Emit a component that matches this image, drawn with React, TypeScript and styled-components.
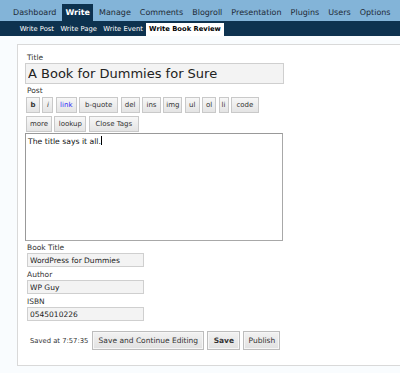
import React from "react";
import styled, { createGlobalStyle } from "styled-components";

const Global = createGlobalStyle`
  html, body { margin: 0; padding: 0; background: #f9fcfe; }
  body {
    font-family: "DejaVu Sans", Verdana, sans-serif;
    color: #333;
    overflow: hidden;
    text-rendering: geometricPrecision;
  }
  * { box-sizing: border-box; }
`;

const Page = styled.div`
  width: 400px;
  height: 373px;
  overflow: hidden;
  background: #f9fcfe;
`;

const MainNav = styled.ul`
  display: flex;
  gap: 3px;
  margin: 0;
  padding: 4px 0 0 10px;
  height: 21px;
  list-style: none;
  background: #83b4d8;
  white-space: nowrap;
`;

const MainItem = styled.li<{ $current?: boolean }>`
  height: 17px;
  line-height: 17px;
  padding: 0 3px;
  font-size: 8px;
  font-weight: ${(p) => (p.$current ? "bold" : "normal")};
  color: ${(p) => (p.$current ? "#fff" : "#1e2a36")};
  background: ${(p) => (p.$current ? "#0d324f" : "transparent")};
`;

const SubNav = styled.ul`
  display: flex;
  margin: 0;
  padding: 2px 0 0 16.5px;
  height: 15px;
  list-style: none;
  background: #0d324f;
  white-space: nowrap;
`;

const SubItem = styled.li<{ $current?: boolean }>`
  height: 13px;
  line-height: 13px;
  padding: 0 ${(p) => (p.$current ? "3px" : "3.2px")};
  font-size: ${(p) => (p.$current ? "6.75px" : "6.8px")};
  font-weight: ${(p) => (p.$current ? "bold" : "normal")};
  color: ${(p) => (p.$current ? "#000" : "#fff")};
  background: ${(p) => (p.$current ? "#fff" : "transparent")};
`;

const Wrap = styled.div`
  margin: 8px 0 0 17px;
  width: 420px;
  background: #fff;
  border: 1px solid #d9d9d9;
  padding: 8px 0 15px 7px;
`;

const Label = styled.div<{ $top?: number }>`
  font-size: 7.5px;
  line-height: ${(p) => (p.$top !== undefined ? "10px" : "9px")};
  margin-top: ${(p) => p.$top ?? 0}px;
  padding-left: 2px;
  color: #333;
`;

const TitleInput = styled.input`
  display: block;
  width: 259px;
  height: 21px;
  margin: 1px 0 2px;
  padding: 0 2px;
  border: 1px solid #cfcfcf;
  background: #f3f3f3;
  font-family: "DejaVu Sans", Verdana, sans-serif;
  font-size: 13px;
  color: #222;
  outline: none;
`;

const Toolbar = styled.div<{ $top: number }>`
  display: flex;
  gap: 2.4px;
  margin: ${(p) => p.$top}px 0 0 1px;
  height: 16px;
`;

const QTag = styled.span<{ $w?: number; $weight?: string; $style?: string; $color?: string }>`
  display: flex;
  align-items: center;
  justify-content: center;
  height: 100%;
  width: ${(p) => (p.$w ? `${p.$w}px` : "auto")};
  border: 1px solid #c9c9c9;
  background: linear-gradient(#f7f7f7, #e4e4e4);
  font-size: 7px;
  font-weight: ${(p) => p.$weight ?? "normal"};
  font-style: ${(p) => p.$style ?? "normal"};
  color: ${(p) => p.$color ?? "#333"};
  white-space: nowrap;
`;

const Editor = styled.div`
  width: 258px;
  height: 108px;
  margin-top: 1px;
  border: 1px solid #a8a8a8;
  border-top-color: #999;
  border-left-color: #999;
  background: #fff;
  padding: 2px 2px;
  font-size: 7.7px;
  line-height: 10px;
  color: #111;
`;

const Caret = styled.span`
  display: inline-block;
  width: 1px;
  height: 9px;
  margin-left: 0.5px;
  background: #000;
  vertical-align: -1.5px;
`;

const Field = styled.input`
  display: block;
  width: 117px;
  height: 14px;
  margin-left: 2px;
  padding: 0 2px;
  border: 1px solid #cfcfcf;
  background: #f3f3f3;
  font-family: "DejaVu Sans", Verdana, sans-serif;
  font-size: 7.5px;
  color: #222;
  outline: none;
`;

const Actions = styled.div`
  display: flex;
  align-items: center;
  margin-top: 10px;
  padding-left: 5px;
  height: 19px;
`;

const Saved = styled.span`
  font-size: 6.8px;
  color: #333;
  margin-right: 4px;
`;

const ActionButton = styled.span<{ $w: number; $bold?: boolean }>`
  display: flex;
  align-items: center;
  justify-content: center;
  width: ${(p) => p.$w}px;
  height: 19px;
  margin-right: 3px;
  border: 1px solid #bdbdbd;
  box-shadow: inset 0 0 0 1px #f6f6f6;
  background: linear-gradient(#f2f2f2, #e1e1e1);
  font-size: 7.5px;
  font-weight: ${(p) => (p.$bold ? "bold" : "normal")};
  color: #333;
  white-space: nowrap;
`;

const menu = ["Dashboard", "Write", "Manage", "Comments", "Blogroll", "Presentation", "Plugins", "Users", "Options"];
const sub = ["Write Post", "Write Page", "Write Event", "Write Book Review"];

export default function App() {
  return (
    <Page>
      <Global />
      <MainNav>
        {menu.map((m) => (
          <MainItem key={m} $current={m === "Write"}>
            {m}
          </MainItem>
        ))}
      </MainNav>
      <SubNav>
        {sub.map((s) => (
          <SubItem key={s} $current={s === "Write Book Review"}>
            {s}
          </SubItem>
        ))}
      </SubNav>
      <Wrap>
        <Label>Title</Label>
        <TitleInput readOnly defaultValue="A Book for Dummies for Sure" />
        <Label>Post</Label>
        <Toolbar $top={2}>
          <QTag $w={14} $weight="bold">b</QTag>
          <QTag $w={11} $style="italic">i</QTag>
          <QTag $w={21} $color="#2f2ff5">link</QTag>
          <QTag $w={39}>b-quote</QTag>
          <QTag $w={19}>del</QTag>
          <QTag $w={19}>ins</QTag>
          <QTag $w={19}>img</QTag>
          <QTag $w={15}>ul</QTag>
          <QTag $w={14}>ol</QTag>
          <QTag $w={10}>li</QTag>
          <QTag $w={28}>code</QTag>
        </Toolbar>
        <Toolbar $top={3}>
          <QTag $w={26}>more</QTag>
          <QTag $w={32}>lookup</QTag>
          <QTag $w={50}>Close Tags</QTag>
        </Toolbar>
        <Editor>
          The title says it all.
          <Caret />
        </Editor>
        <Label $top={2}>Book Title</Label>
        <Field readOnly defaultValue="WordPress for Dummies" />
        <Label $top={3}>Author</Label>
        <Field readOnly defaultValue="WP Guy" />
        <Label $top={3}>ISBN</Label>
        <Field readOnly defaultValue="0545010226" />
        <Actions>
          <Saved>Saved at 7:57:35</Saved>
          <ActionButton $w={112}>Save and Continue Editing</ActionButton>
          <ActionButton $w={33} $bold>
            Save
          </ActionButton>
          <ActionButton $w={37}>Publish</ActionButton>
        </Actions>
      </Wrap>
    </Page>
  );
}
